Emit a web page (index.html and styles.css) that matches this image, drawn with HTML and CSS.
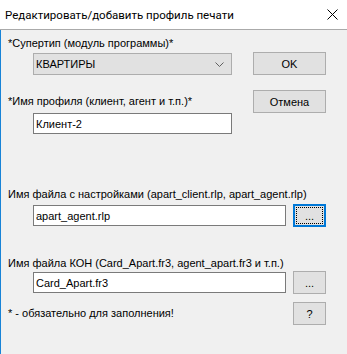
FILE: index.html
```html
<!DOCTYPE html>
<html lang="ru">
<head>
    <meta charset="UTF-8">
    <title>Редактировать/добавить профиль печати</title>
    <link rel="stylesheet" href="styles.css">
</head>
<body>
    <div class="window">
        <div class="titlebar">
            <span class="title">Редактировать/добавить профиль печати</span>
            <span class="close">
                <svg width="11" height="11" viewBox="0 0 11 11">
                    <path d="M0.5 0.5 L10.5 10.5 M10.5 0.5 L0.5 10.5" stroke="#000" stroke-width="1" fill="none"/>
                </svg>
            </span>
        </div>

        <div class="client">
            <div class="row row-label1">
                <span class="label">*Супертип (модуль программы)*</span>
            </div>

            <div class="row row-combo">
                <div class="combo">
                    <span>КВАРТИРЫ</span>
                    <svg width="9" height="5" viewBox="0 0 9 5">
                        <path d="M0.5 0.5 L4.5 4.5 L8.5 0.5" stroke="#606060" fill="none"/>
                    </svg>
                </div>
                <button class="btn">OK</button>
            </div>

            <div class="row row-name">
                <span class="label">*Имя профиля (клиент, агент и т.п.)*</span>
                <button class="btn">Отмена</button>
            </div>

            <div class="row row-input">
                <div class="field field-short">Клиент-2</div>
            </div>

            <div class="row row-label2">
                <span class="label">Имя файла с настройками (apart_client.rlp, apart_agent.rlp)</span>
            </div>

            <div class="row row-file">
                <div class="field field-long">apart_agent.rlp</div>
                <button class="btn btn-small focused"><span class="focus-rect">...</span></button>
            </div>

            <div class="row row-label3">
                <span class="label">Имя файла КОН (Card_Apart.fr3, agent_apart.fr3 и т.п.)</span>
            </div>

            <div class="row row-file2">
                <div class="field field-long">Card_Apart.fr3</div>
                <button class="btn btn-small">...</button>
            </div>

            <div class="row row-note">
                <span class="label">* - обязательно для заполнения!</span>
                <button class="btn btn-small">?</button>
            </div>
        </div>
    </div>
</body>
</html>
```

FILE: styles.css
```css
* {
    margin: 0;
    padding: 0;
    box-sizing: border-box;
}

body {
    font-family: 'Liberation Sans', Arial, sans-serif;
    font-size: 11px;
    color: #000;
    background: #f0f0f0;
}

.window {
    width: 347px;
    height: 354px;
    display: flex;
    flex-direction: column;
}

.titlebar {
    height: 30px;
    background: #fff;
    border-bottom: 1px solid #aaaaaa;
    display: flex;
    align-items: center;
    justify-content: space-between;
    padding-left: 5px;
    padding-right: 9px;
}

.title {
    font-family: Roboto, 'Noto Sans', sans-serif;
    font-size: 11.5px;
    color: #000;
}

.close {
    display: flex;
}

.client {
    flex: 1;
    background: #f0f0f0;
    border-left: 1px solid #1883d7;
    padding-left: 7px;
}

.row {
    display: flex;
    align-items: center;
}

.label {
    line-height: 13px;
    white-space: nowrap;
}

.row-label1 {
    margin-top: 7px;
    height: 13px;
}

.row-combo {
    margin-top: 2px;
    height: 23px;
}

.combo {
    width: 199px;
    height: 22px;
    margin-left: 25px;
    margin-right: 21px;
    margin-top: 1px;
    background: #e1e1e1;
    border: 1px solid #adadad;
    display: flex;
    align-items: center;
    justify-content: space-between;
    padding-left: 2px;
    padding-right: 7px;
}

.btn {
    font-family: inherit;
    font-size: 11px;
    color: #000;
    width: 73px;
    height: 23px;
    background: #e1e1e1;
    border: 1px solid #adadad;
}

.row-name {
    margin-top: 15px;
    height: 23px;
    justify-content: space-between;
    padding-right: 21px;
}

.row-input {
    height: 21px;
}

.field {
    height: 21px;
    background: #fff;
    border: 1px solid #7a7a7a;
    margin-left: 25px;
    padding-left: 2px;
    display: flex;
    align-items: center;
}

.field-short {
    width: 199px;
}

.field-long {
    width: 253px;
    margin-right: 7px;
}

.row-label2 {
    margin-top: 54px;
    height: 13px;
}

.row-file {
    margin-top: 3px;
    height: 23px;
}

.btn-small {
    width: 33px;
}

.focused {
    border: 2px solid #0078d7;
    padding: 1px;
}

.focus-rect {
    display: flex;
    align-items: center;
    justify-content: center;
    width: 100%;
    height: 100%;
    border: 1px dotted #000;
}

.row-label3 {
    margin-top: 30px;
    height: 13px;
}

.row-file2 {
    margin-top: 1px;
    height: 23px;
}

.row-note {
    margin-top: 8px;
    height: 23px;
}

.row-note .label {
    width: 285px;
}
```
